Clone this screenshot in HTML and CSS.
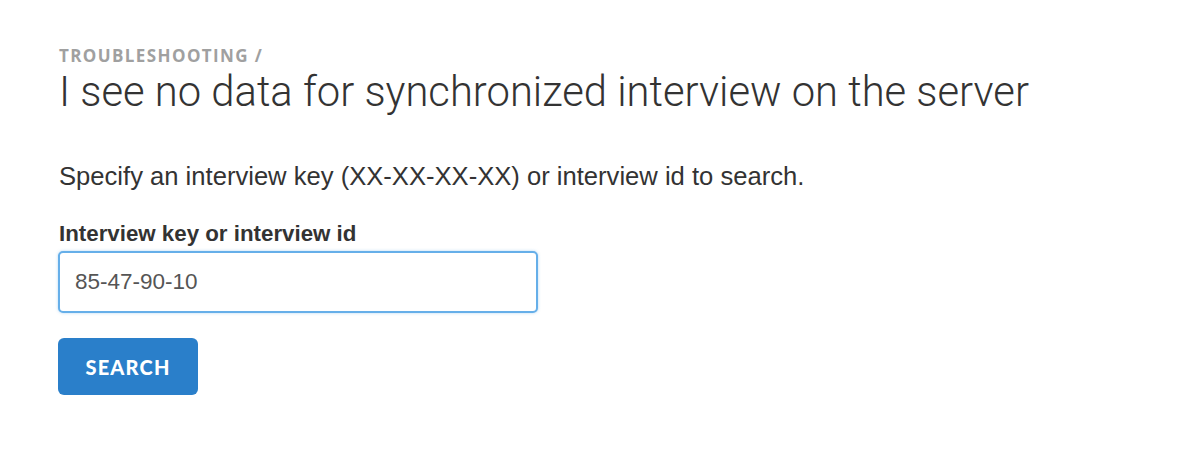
FILE: index.html
```html
<!DOCTYPE html>
<html>
<head>
<meta charset="utf-8">
<link rel="stylesheet" href="styles.css">
</head>
<body>
<main class="page">
  <div class="crumb">TROUBLESHOOTING /</div>
  <h1 class="title">I see no data for synchronized interview on the server</h1>
  <p class="lead">Specify an interview key (XX-XX-XX-XX) or interview id to search.</p>
  <form class="form">
    <label class="label" for="key">Interview key or interview id</label>
    <input class="input" id="key" type="text" value="85-47-90-10">
    <button class="btn" type="button">SEARCH</button>
  </form>
</main>
</body>
</html>
```

FILE: styles.css
```css
html, body {
  margin: 0;
  padding: 0;
  background: #fff;
}
.page {
  padding: 46px 0 0 59px;
}
.crumb {
  font-family: "Open Sans", sans-serif;
  font-weight: 700;
  font-size: 17px;
  letter-spacing: 1.4px;
  color: #a0a0a0;
  line-height: 20px;
}
.title {
  margin: 2px 0 0;
  font-family: Roboto, sans-serif;
  font-weight: 300;
  font-size: 41.75px;
  line-height: 48px;
  color: #333;
}
.lead {
  margin: 44px 0 0;
  font-family: "Liberation Sans", Arial, sans-serif;
  font-size: 25.6px;
  line-height: 32px;
  color: #333;
}
.form {
  display: flex;
  flex-direction: column;
  align-items: flex-start;
  margin-top: 28px;
}
.label {
  font-family: "Liberation Sans", Arial, sans-serif;
  font-weight: 700;
  font-size: 22.3px;
  line-height: 28px;
  color: #333;
  margin-bottom: 3px;
}
.input {
  box-sizing: border-box;
  width: 480px;
  height: 62px;
  margin-left: -1px;
  padding: 0 15px;
  border: 2px solid #66afe9;
  border-radius: 5px;
  font-family: "Liberation Sans", Arial, sans-serif;
  font-size: 22.5px;
  color: #555;
  outline: none;
  box-shadow: 0 0 3px rgba(102, 175, 233, 0.5);
}
.btn {
  margin-top: 25px;
  margin-left: -1px;
  width: 140px;
  height: 57px;
  border: none;
  border-radius: 6px;
  background: #2a7fca;
  color: #fff;
  font-family: Lato, sans-serif;
  font-weight: 900;
  font-size: 20px;
  letter-spacing: 1.2px;
  cursor: pointer;
}
```
